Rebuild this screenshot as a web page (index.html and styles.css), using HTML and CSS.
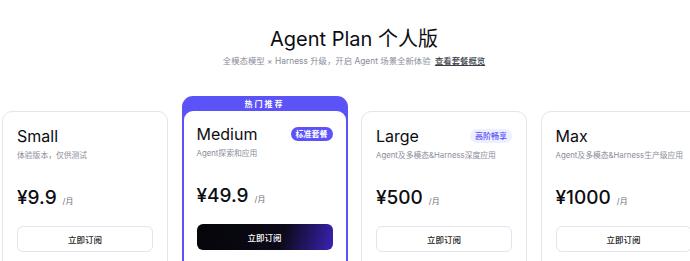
FILE: index.html
```html
<!DOCTYPE html>
<html lang="zh">
<head>
<meta charset="utf-8">
<link rel="stylesheet" href="styles.css">
</head>
<body>
<header class="head">
  <h1 class="title">Agent Plan 个人版</h1>
  <p class="sub">全模态模型 × Harness 升级，开启 Agent 场景全新体验 <a class="link">查看套餐概览</a></p>
</header>
<section class="plans">
  <div class="card">
    <div class="top"><span class="name">Small</span></div>
    <div class="desc">体验版本，仅供测试</div>
    <div class="price"><span class="amt">¥9.9</span><span class="unit">/月</span></div>
    <button class="btn">立即订阅</button>
  </div>
  <div class="card hot">
    <div class="ribbon">热门推荐</div>
    <div class="inner">
      <div class="top"><span class="name">Medium</span><span class="badge solid">标准套餐</span></div>
      <div class="desc">Agent探索和应用</div>
      <div class="price"><span class="amt">¥49.9</span><span class="unit">/月</span></div>
      <button class="btn dark">立即订阅</button>
    </div>
  </div>
  <div class="card">
    <div class="top"><span class="name">Large</span><span class="badge soft">高阶畅享</span></div>
    <div class="desc">Agent及多模态&amp;Harness深度应用</div>
    <div class="price"><span class="amt">¥500</span><span class="unit">/月</span></div>
    <button class="btn">立即订阅</button>
  </div>
  <div class="card">
    <div class="top"><span class="name">Max</span></div>
    <div class="desc">Agent及多模态&amp;Harness生产级应用</div>
    <div class="price"><span class="amt">¥1000</span><span class="unit">/月</span></div>
    <button class="btn">立即订阅</button>
  </div>
</section>
</body>
</html>
```
FILE: styles.css
```css
* { box-sizing: border-box; }
html, body { margin: 0; padding: 0; background: #fff; overflow: hidden; }
body {
  width: 690px; height: 261px;
  font-family: Inter, "Noto Sans CJK SC", sans-serif;
  color: #0d0d12;
}
.head { text-align: center; padding-top: 26px; padding-left: 18px; }
.title { margin: 0; font-size: 20px; line-height: 26px; font-weight: 400; letter-spacing: 0; }
.sub { margin: 3px 0 0; font-size: 8.4px; line-height: 13px; color: #8a8d99; }
.link { color: #3b3d48; text-decoration: underline; font-weight: 500; margin-left: 2px; }
.plans {
  display: flex; gap: 13.5px; padding-left: 2px; margin-top: 28px;
  width: 760px; align-items: flex-start;
}
.card {
  flex: 0 0 166px; width: 166px; height: 170px;
  margin-top: 15px;
  border: 1px solid #e3e4ef; border-radius: 10px;
  padding: 14px 14px 0;
  background: #fff;
  white-space: nowrap;
}
.card.hot {
  margin-top: 0; padding: 0; height: 185px;
  border: 2px solid #5b52f7; background: #5b52f7; border-radius: 11px;
  display: flex; flex-direction: column;
}
.ribbon {
  height: 13px; line-height: 13px; text-align: center; color: #fff;
  font-size: 8px; font-weight: 600; letter-spacing: 2px;
}
.inner { background: #fff; flex: 1; border-radius: 9px 9px 0 0; padding: 13px 13px 0; }
.top { display: flex; justify-content: space-between; align-items: center; height: 20px; }
.name { font-size: 16px; line-height: 20px; font-weight: 400; }
.badge { font-size: 8px; line-height: 14px; padding: 0 5px; border-radius: 8px; font-weight: 600; }
.badge.solid { background: #5b52f7; color: #fff; }
.badge.soft { background: #eef0ff; color: #5b52f7; font-weight: 500; }
.desc { margin-top: 3px; font-size: 7.8px; line-height: 12px; color: #8a8d99; }
.price { margin-top: 24px; display: flex; align-items: baseline; height: 26px; }
.amt { font-size: 19px; line-height: 26px; font-weight: 500; }
.unit { font-size: 8px; color: #6b6e7a; margin-left: 6px; }
.btn {
  display: block; margin-top: 15px; width: 136px; height: 26px;
  border: 1px solid #e3e4ef; border-radius: 6px; background: #fff;
  font-family: inherit; font-size: 8.5px; color: #1a1b22; font-weight: 500;
}
.btn.dark {
  border: none; color: #fff;
  background: linear-gradient(105deg, #050509 0%, #0b0a18 62%, #3a22b5 100%);
}
```
